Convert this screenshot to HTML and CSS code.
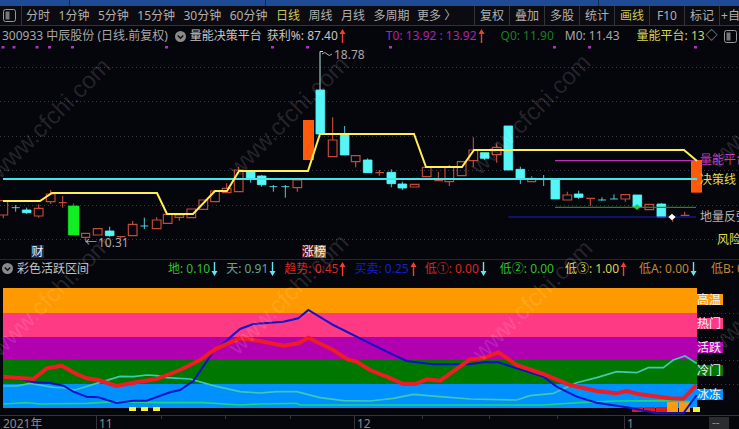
FILE: index.html
```html
<!DOCTYPE html>
<html lang="zh">
<head>
<meta charset="utf-8">
<title>量能决策平台</title>
<link rel="stylesheet" href="styles.css">
</head>
<body>
<svg class="defs" width="0" height="0" aria-hidden="true">
  <symbol id="up" viewBox="0 0 7 14"><path d="M3.5 0 6.5 5H4.2V14H2.8V5H.5Z"/></symbol>
  <symbol id="down" viewBox="0 0 7 14"><path d="M3.5 14 6.5 9H4.2V0H2.8V9H.5Z"/></symbol>
  <symbol id="chev" viewBox="0 0 12 12"><circle cx="6" cy="6" r="6" fill="#8a8a8a"/><path d="M3 4.8 6 7.8 9 4.8" fill="none" stroke="#101014" stroke-width="1.6"/></symbol>
  <symbol id="panel" viewBox="0 0 13 13"><rect x=".5" y=".5" width="12" height="12" rx="2" fill="none" stroke="#999"/><rect x="2.5" y="2.5" width="4" height="8" fill="#777"/></symbol>
</svg>
<div class="page">
  <div class="topbar">
    <span class="cut cut-a"></span><span class="cut cut-b"></span><span class="cut cut-c"></span>
  </div>
  <nav class="toolbar">
    <svg class="tool-icon"><use href="#panel"/></svg>
    <div class="periods">
      <span>分时</span><span>1分钟</span><span>5分钟</span><span>15分钟</span><span>30分钟</span><span>60分钟</span>
      <span class="hl">日线</span><span>周线</span><span>月线</span><span>多周期</span><span class="more">更多 〉</span>
    </div>
    <div class="tools">
      <span>复权</span><span>叠加</span><span>多股</span><span>统计</span><span class="hl">画线</span><span>F10</span><span>标记</span><span class="add">+自</span>
    </div>
  </nav>
  <div class="legend legend-main">
    <span class="gray">300933 中辰股份 (日线.前复权)</span>
    <svg class="chev chev-main"><use href="#chev"/></svg>
    <span class="light">量能决策平台</span>
    <span class="light win">获利%: 87.40</span><svg class="arrow red-a"><use href="#up"/></svg>
    <span class="magenta t0">T0: 13.92 : 13.92</span><svg class="arrow red-a"><use href="#up"/></svg>
    <span class="dkgreen q0">Q0: 11.90</span>
    <span class="gray m0">M0: 11.43</span>
    <span class="yellow pf">量能平台: 13</span>
    <span class="gray diamond">◇</span>
    <svg class="side-icon"><use href="#panel"/></svg>
  </div>

  <svg class="chart" width="739" height="213" viewBox="0 46 739 213">
    <g class="dots">
      <path class="grid" d="M0 67.500H739M0 101.500H739M0 136.500H739M0 170.500H739M0 205.500H739M0 239.500H739"/>
      <path class="pins" d="M1.500 45.500h3v3h-3zM12.500 45.500h3v3h-3zM35.500 45.500h3v3h-3zM48 45.500h3v3h-3zM71 45.500h3v3h-3zM165 45.500h3v3h-3zM271 45.500h3v3h-3zM306 45.500h3v3h-3zM389 45.500h3v3h-3zM553 45.500h3v3h-3zM588 45.500h3v3h-3zM694 45.500h3v3h-3z"/>
    </g>
    <g transform="translate(0 110) scale(.33333)">
      <path class="wk-cyan" d="M961 -62V-60M961 -60V-0"/>
      <path class="c-red" d="M10 315V325M-3 272h26v43h-26zM116 283V295M116 318V323M103 295h26v23h-26zM152 240V252M152 275V282M139 252h26v23h-26zM176 278h24M188 258V293M257 382V395M245 370h24v12h-24zM280 356h26v19h-26zM350 380h26M362 380V386M398 333V343M385 343h26v34h-26zM470 322V330M470 356V358M457 330h26v26h-26zM490 313h26v27h-26zM525 315h26v7h-26zM538 322V332M561 297h26v26h-26zM597 270h26v28h-26zM632 243h26v32h-26zM680 220V235M667 235h26v13h-26zM716 170V180M703 180h26v65h-26zM892 233V245M879 210h26v23h-26zM998 22V90M985 90h26v50h-26zM1067 155V172M1054 137h26v18h-26z"/>
      <path class="c-cyan" d="M35 293h24M47 285V305M67 300h26v8h-26zM80 293V312M316 363h26v14h-26zM329 350V380M421 348h24M433 323V357M739 185h26v20h-26zM752 205V218M772 198h26v26h-26zM785 195V230M808 230h24M820 225V245M844 230h24M856 225V263M948 -60h26V72h-26zM1021 72h26v63h-26zM1034 48V72M1090 150h26v38h-26zM1103 145V150"/>
      <path class="c-green" d="M205 288h32v87h-32zM221 280V288"/>
      <path class="c-orange" d="M909 30h33v120h-33z"/>
    </g>
    <g transform="translate(370 110) scale(.33333)">
      <path class="c-red" d="M16 188h26M28 180V197M121 223h26v8h-26zM157 172h26v28h-26zM193 212h26M205 185V213M225 172h26v43h-26zM238 165V172M238 215V228M262 155h26v42h-26zM310 82V120M310 152V170M297 120h26v32h-26zM380 100V112M380 134V158M367 112h26v22h-26zM473 205h24v10h-24zM485 198V205M579 255h26v15h-26zM592 245V255M649 265h26M661 265V288M753 254h26v13h-26zM766 267V275M825 283h26v16h-26zM932 316h26M944 305V316M908 325V335"/>
      <path class="c-cyan" d="M51 187h26v34h-26zM64 178V187M64 221V232M84 222h26v12h-26zM97 215V240M331 128h26v17h-26zM344 145V150M402 48h26v132h-26zM438 178h26v29h-26zM451 170V178M451 207V222M521 195V228M543 208h26v59h-26zM613 252h26v10h-26zM626 242V267M684 270h24M696 262V272M720 267h24M732 253V267M789 255h26v37h-26zM861 282h26v39h-26zM874 279V282"/>
      <path class="c-orange" d="M963 150h33v98h-33z"/>
      <path class="ln-magenta" d="M555 152H980"/>
      <path class="ln-green" d="M555 292H978"/>
      <path class="ln-navy" d="M415 321H978"/>
      <path class="dia-green" d="M801 282 811 291 801 300 791 291Z"/>
      <path class="dia-white" d="M906 311 917 321 906 331 895 321Z"/>
    </g>
    <path class="ln-cyan" d="M3 179H697"/>
    <path class="ln-yellow" d="M3 201H40L52 193H157L167 214H193L215 191H227L239 171H308L320 134H414L426 167H462L474 150H684L697 161"/>
    <path class="spike" d="M320 90V51.500H323"/>
    <text class="t-label t-gray" x="334" y="59">18.78</text>
    <path class="spike-note" d="M322 54q3-3 5 0t5 0"/>
    <text class="t-label t-gray" x="85" y="247">←</text>
    <text class="t-label t-gray" x="98" y="247">10.31</text>
    <rect class="tag-blue" x="31" y="245" width="13" height="13"/>
    <text class="t-label t-white" x="31.500" y="256">财</text>
    <rect class="tag-red" x="302" y="245" width="12" height="13"/>
    <rect class="tag-brown" x="314" y="245" width="12" height="13"/>
    <text class="t-label t-white" x="302" y="256">涨榜</text>
    <text class="t-label t-magenta" x="700" y="164">量能平台</text>
    <text class="t-label t-yellow" x="700" y="184">决策线</text>
    <text class="t-label t-silver" x="700" y="221">地量反弹</text>
    <text class="t-label t-yellow" x="717" y="244">风险</text>
  </svg>

  <div class="legend legend-sub">
    <svg class="chev"><use href="#chev"/></svg>
    <span class="light name">彩色活跃区间</span>
    <span class="green di">地: 0.10</span><svg class="arrow cy-a"><use href="#down"/></svg>
    <span class="teal">天: 0.91</span><svg class="arrow cy-a"><use href="#down"/></svg>
    <span class="red">趋势: 0.45</span><svg class="arrow red-a"><use href="#up"/></svg>
    <span class="blue">买卖: 0.25</span><svg class="arrow red-a"><use href="#up"/></svg>
    <span class="red">低①: 0.00</span><svg class="arrow cy-a"><use href="#down"/></svg>
    <span class="green low2">低②: 0.00</span>
    <span class="yellow low3">低③: 1.00</span><svg class="arrow red-a"><use href="#up"/></svg>
    <span class="amber lowa">低A: 0.00</span><svg class="arrow cy-a"><use href="#down"/></svg>
    <span class="amber lowb">低B: 0</span>
  </div>

  <svg class="chart" width="739" height="138" viewBox="0 277 739 138">
    <path class="grid" d="M697 313.500H739M697 337.500H739M697 360.500H739M697 384.500H739"/>
    <rect class="b-orange" x="3" y="288" width="694" height="25"/>
    <rect class="b-pink" x="3" y="313" width="694" height="24"/>
    <rect class="b-purple" x="3" y="337" width="694" height="23"/>
    <rect class="b-green" x="3" y="360" width="694" height="24"/>
    <rect class="b-blue" x="3" y="384" width="694" height="24"/>
    <rect class="b-orange" x="697" y="294" width="26" height="11"/>
    <rect class="b-pink" x="697" y="318" width="26" height="11"/>
    <rect class="b-purple" x="697" y="342" width="26" height="11"/>
    <rect class="b-green" x="697" y="365" width="26" height="11"/>
    <rect class="b-blue" x="697" y="389" width="26" height="11"/>
    <text class="t-label t-white" x="697" y="304">高温</text>
    <text class="t-label t-white" x="697" y="328">热门</text>
    <text class="t-label t-white" x="697" y="352">活跃</text>
    <text class="t-label t-white" x="697" y="375">冷门</text>
    <text class="t-label t-white" x="697" y="399">冰冻</text>
    <path class="m-yellow" d="M129 407h7v4h-7zM141 407h7v4h-7zM153 407h7v4h-7zM693 407h7v5h-7z"/>
    <path class="m-red" d="M632 407h11v5h-11zM644 407h11v5h-11zM656 407h11v5h-11z"/>
    <path class="m-orange" d="M667 402h11v10h-11zM679 402h11v10h-11z"/>
    <g transform="translate(0 255) scale(.33333)">
      <path class="l-green" d="M10 447 80 443 120 447 260 445 350 440 470 443 610 443 720 450 780 447 890 445 900 450 1110 450 1630 450 1740 443 1840 438 1990 437 2070 440"/>
      <path class="l-teal" d="M10 393 50 393 90 385 160 397 190 398 225 405 300 382 360 364 400 365 440 360 470 362 500 368 570 372 640 392 720 410 780 414 830 410 890 410 960 428 1030 437 1110 438 1180 430 1240 418 1320 425 1410 432 1550 435 1590 422 1660 415 1730 383 1790 368 1850 350 1910 353 1945 338 1990 338 2020 315 2055 303 2090 325"/>
      <path class="l-blue" d="M10 365 40 365 100 382 150 384 190 392 220 410 260 425 295 427 350 444 400 437 440 437 510 412 540 405 580 378 640 290 720 222 760 207 850 200 895 190 925 165 1000 210 1110 265 1160 290 1220 318 1300 328 1410 328 1450 322 1495 322 1550 340 1630 365 1670 395 1730 425 1790 443 1890 458 1970 475 2050 475 2090 420"/>
      <path class="l-red" d="M10 365 100 372 140 340 185 332 225 355 260 370 295 375 350 393 400 383 470 372 540 345 600 315 650 280 720 250 780 258 850 272 895 265 925 248 1000 285 1040 312 1070 320 1110 345 1160 365 1210 387 1245 387 1280 373 1320 377 1410 313 1450 310 1495 292 1550 330 1630 357 1710 390 1790 408 1850 415 1880 408 1920 418 2010 430 2050 431 2090 390"/>
    </g>
  </svg>

  <svg class="chart axis" width="739" height="14" viewBox="0 415 739 14">
    <path class="axis-line" d="M0 415.500H739M96.500 416V429M161.500 416V419M225.500 416V419M290.500 416V419M354.500 416V429M422.500 416V419M489.500 416V419M557.500 416V419M624.500 416V429"/>
    <text class="t-axis" x="3" y="428">2021年</text>
    <text class="t-axis" x="99" y="428">11</text>
    <text class="t-axis" x="357" y="428">12</text>
    <text class="t-axis" x="627" y="428">1</text>
    <rect class="dash-box" x="709" y="417" width="20" height="12"/>
    <text class="t-axis" x="712" y="427">--</text>
  </svg>

  <svg class="watermark" width="739" height="429" viewBox="0 0 739 429">
    <text transform="translate(0 180) rotate(-45)">www.cfchi.com</text>
    <text transform="translate(238 178) rotate(-45)">www.cfchi.com</text>
    <text transform="translate(480 176) rotate(-45)">www.cfchi.com</text>
    <text transform="translate(718 170) rotate(-45)">www.cfchi.com</text>
    <text transform="translate(0 358) rotate(-45)">www.cfchi.com</text>
    <text transform="translate(238 356) rotate(-45)">www.cfchi.com</text>
    <text transform="translate(482 362) rotate(-45)">www.cfchi.com</text>
    <text transform="translate(718 356) rotate(-45)">www.cfchi.com</text>
  </svg>
</div>
</body>
</html>
```
FILE: styles.css
```css
* { box-sizing: border-box; }
html, body { margin: 0; padding: 0; background: #05050c; }
body { font-family: "Noto Sans", "Noto Sans CJK SC", sans-serif; font-size: 12px; overflow: hidden; }
.defs { position: absolute; }
.page { position: relative; width: 739px; height: 429px; overflow: hidden; }

.topbar { height: 6px; background: #1f4a94; position: relative; display: flex; }
.cut { width: 1px; height: 6px; background: #0d2a58; }
.cut-a { margin-left: 69px; }
.cut-b { margin-left: 195px; }
.cut-c { margin-left: 332px; }

.toolbar { height: 20px; display: flex; align-items: center; background: #0b0b11; border-bottom: 1px solid #333338; color: #b0b0b0; white-space: nowrap; line-height: 20px; overflow: hidden; }
.tool-icon { width: 13px; height: 13px; margin-left: 3px; flex: none; }
.periods { display: flex; height: 20px; margin-left: 5px; padding-left: 4px; gap: 8.5px; border-left: 1px solid #333338; width: 453px; flex: none; }
.periods .more { margin-left: -1px; }
.tools { display: flex; height: 20px; border-left: 1px solid #333338; flex: none; }
.tools span { width: 35px; text-align: center; border-right: 1px solid #333338; flex: none; }
.tools .add { width: 21px; border-right: 0; }
.hl { color: #c8c85a; }

.legend { display: flex; align-items: center; white-space: nowrap; overflow: hidden; line-height: 20px; }
.legend-main { height: 20px; padding-left: 2px; }
.legend-sub { height: 18px; padding-left: 2px; margin-top: 0; border-top: 1px solid #26262c; }
.chev { width: 11px; height: 11px; flex: none; }
.chev-main { margin: 0 4px 0 7px; }
.name { margin: 0 79px 0 4px; }
.arrow { width: 7px; height: 14px; margin: 0 8px 0 1px; flex: none; }
.side-icon { width: 13px; height: 13px; margin-left: 7px; flex: none; }
.gray { color: #a8a8a8; }
.light { color: #c4c4c4; }
.win { margin-left: 5px; }
.t0 { margin-left: 32px; }
.q0 { margin-left: 8px; }
.m0 { margin-left: 11px; }
.pf { margin-left: 17px; width: 69px; overflow: hidden; flex: none; }
.diamond { width: 11px; flex: none; }
.low2 { margin-left: 5px; }
.low3 { margin-left: 11px; }
.lowa { margin-left: 4px; }
.lowb { margin-left: 6px; }
.magenta { color: #b022b0; }
.dkgreen { color: #1f7d1f; }
.yellow { color: #d4d45a; }
.green { color: #2fc02f; }
.teal { color: #5aa898; }
.red { color: #d22a22; }
.blue { color: #1420c8; }
.amber { color: #c08838; }
.red-a { fill: #ee4030; }
.cy-a { fill: #66e6f0; }

.chart { display: block; }
.grid { fill: none; stroke: #3a3a44; stroke-dasharray: 1 3; }
.pins { fill: #b030c0; }
.c-red { fill: none; stroke: #c44a3a; stroke-width: 3.5; }
.c-cyan { fill: #55f5f8; stroke: #55f5f8; stroke-width: 2.5; }
.c-green { fill: #11ee22; stroke: #11ee22; stroke-width: 2; }
.c-orange { fill: #ff5a0a; }
.wk-cyan { stroke: #55f5f8; stroke-width: 2; }
.ln-cyan { fill: none; stroke: #44e6e8; stroke-width: 2; }
.ln-yellow { fill: none; stroke: #ffee55; stroke-width: 2; }
.ln-magenta { stroke: #c030b8; stroke-width: 3.5; }
.ln-green { stroke: #1c8a1c; stroke-width: 3.5; }
.ln-navy { stroke: #1c20c8; stroke-width: 3.5; }
.dia-green { fill: #22cc44; }
.dia-white { fill: #ffffff; }
.spike { fill: none; stroke: #b8e8e8; }
.spike-note { fill: none; stroke: #b0b0b0; }
.t-label { font-size: 12px; font-family: "Noto Sans", "Noto Sans CJK SC", sans-serif; }
.t-gray { fill: #a8a8a8; }
.t-white { fill: #f2f2f2; }
.t-magenta { fill: #b83ab8; }
.t-yellow { fill: #e0dc50; }
.t-silver { fill: #b4b4b4; }
.tag-blue { fill: #10305a; }
.tag-red { fill: #5a1010; }
.tag-brown { fill: #8a5a20; }

.b-orange { fill: #ff9900; }
.b-pink { fill: #ff3a85; }
.b-purple { fill: #b000b0; }
.b-green { fill: #007700; }
.b-blue { fill: #0090ff; }
.m-yellow { fill: #f8f030; }
.m-red { fill: #e01818; }
.m-orange { fill: #ff9a10; }
.l-green { fill: none; stroke: #18d878; stroke-width: 5; }
.l-teal { fill: none; stroke: #40c8b4; stroke-width: 5; }
.l-blue { fill: none; stroke: #1010c8; stroke-width: 6; }
.l-red { fill: none; stroke: #ee1c24; stroke-width: 12; }

.axis-line { fill: none; stroke: #34343a; }
.t-axis { font-size: 12px; fill: #8a8a8a; font-family: "Noto Sans", "Noto Sans CJK SC", sans-serif; }
.dash-box { fill: #2c2c30; }

.watermark { position: absolute; left: 0; top: 0; pointer-events: none; }
.watermark text { font-family: "Liberation Sans", sans-serif; font-size: 24px; fill: #ffffff; fill-opacity: .13; }
```
